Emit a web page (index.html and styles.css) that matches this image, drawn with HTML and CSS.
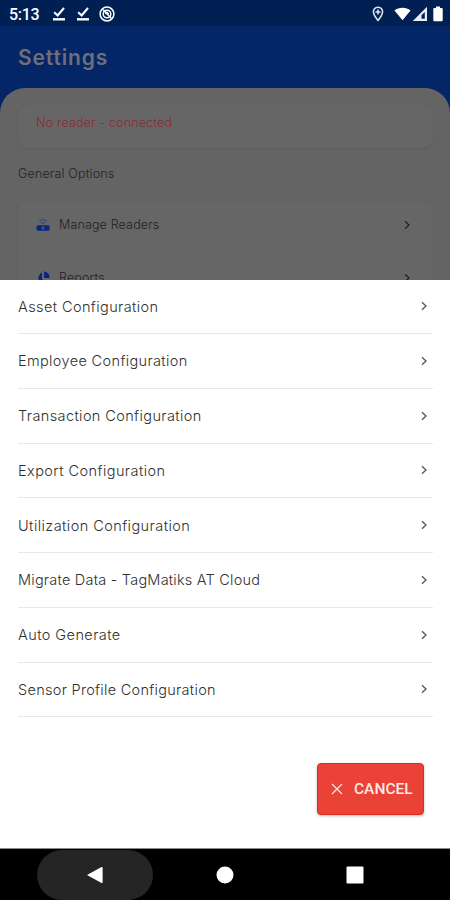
FILE: index.html
```html
<!DOCTYPE html>
<html lang="en">
<head>
<meta charset="utf-8">
<title>Settings</title>
<link rel="stylesheet" href="styles.css">
</head>
<body>
<svg class="defs" aria-hidden="true">
  <symbol id="chevron" viewBox="0 0 8 10"><path d="M2 1.2 6 5 2 8.8" fill="none" stroke="currentColor" stroke-width="1.3"/></symbol>
  <symbol id="done" viewBox="0 0 14 16"><path d="M2.2 6.2 5.6 9.4 12 2" fill="none" stroke="#fff" stroke-width="2.1"/><path d="M1 12.1h12v2.4H1z" fill="#fff"/></symbol>
</svg>
<div class="screen">
  <div class="statusbar">
    <span class="time">5:13</span>
    <svg class="done" viewBox="0 0 14 16"><use href="#done"/></svg>
    <svg class="done second" viewBox="0 0 14 16"><use href="#done"/></svg>
    <svg class="sync" viewBox="0 0 16 16" fill="none" stroke="#fff"><circle cx="8" cy="8" r="6.9" stroke-width="1.5"/><circle cx="8" cy="8" r="3.8" stroke-width="1.5"/><path d="M4 3.8 12.3 12.2M6.4 8 8 6.3 9.7 8.2" stroke-width="1.5"/></svg>
    <svg class="pin" viewBox="0 0 12 16"><path d="M6 1.2C3.2 1.2 1.4 3.2 1.4 5.8 1.4 9 6 14.4 6 14.4S10.600 9 10.600 5.800C10.600 3.200 8.800 1.200 6 1.200Z" fill="none" stroke="#e4e8f6" stroke-width="1.500"/><path d="M6 3.500v5M3.500 6h5" stroke="#e4e8f6" stroke-width="1.500"/></svg>
    <svg class="wifi" viewBox="0 0 18 16"><path d="M.5 4.200C5 .4 13 .4 17.500 4.200L9 14.700Z" fill="#fff"/></svg>
    <svg class="signal" viewBox="0 0 16 16"><path fill-rule="evenodd" d="M15 .8V15H.8ZM12.800 6V12.800H9.500V9.300Z" fill="#e9ecf7"/></svg>
    <svg class="battery" viewBox="0 0 10 16"><path d="M3 .5h4v1.500h1.700q1 0 1 1v11.200q0 1-1 1H1.300q-1 0-1-1V3q0-1 1-1H3z" fill="#fff"/></svg>
  </div>
  <div class="app">
    <h1>Settings</h1>
    <div class="page">
      <div class="reader">No reader - connected</div>
      <h2>General Options</h2>
      <div class="options">
        <div class="option">
          <svg class="glyph" viewBox="0 0 14 14"><path d="M2 7.200h10q1.500 0 1.500 1.500v2.500q0 1.500-1.500 1.500H2q-1.500 0-1.500-1.500V8.700Q.5 7.200 2 7.200z" fill="#0a2580"/><path d="M3 3.300Q7 0 11 3.300M4.500 4Q7 6.500 9.500 4" fill="none" stroke="#3b4c78" stroke-width="1.100"/><path d="M7 8.300v3.400M5.500 10h3" stroke="#667" stroke-width="1"/></svg>
          <span>Manage Readers</span><svg class="chevron"><use href="#chevron"/></svg>
        </div>
        <div class="option">
          <svg class="glyph" viewBox="0 0 14 14"><path d="M6 1.500V8l5 4.500A6 6 0 1 1 6 1.500Z" fill="#0a2580"/><path d="M8 .5A6 6 0 0 1 13.500 7H8Z" fill="#0a2580"/></svg>
          <span>Reports</span><svg class="chevron"><use href="#chevron"/></svg>
        </div>
      </div>
    </div>
  </div>
  <div class="sheet">
    <ul>
      <li><span class="w1">Asset Configuration</span><svg class="chevron"><use href="#chevron"/></svg></li>
      <li><span class="w2">Employee Configuration</span><svg class="chevron"><use href="#chevron"/></svg></li>
      <li><span class="w3">Transaction Configuration</span><svg class="chevron"><use href="#chevron"/></svg></li>
      <li><span class="w4">Export Configuration</span><svg class="chevron"><use href="#chevron"/></svg></li>
      <li><span class="w5">Utilization Configuration</span><svg class="chevron"><use href="#chevron"/></svg></li>
      <li><span class="w6">Migrate Data - TagMatiks AT Cloud</span><svg class="chevron"><use href="#chevron"/></svg></li>
      <li><span class="w7">Auto Generate</span><svg class="chevron"><use href="#chevron"/></svg></li>
      <li><span class="w8">Sensor Profile Configuration</span><svg class="chevron"><use href="#chevron"/></svg></li>
    </ul>
    <button class="cancel"><svg viewBox="0 0 12 12"><path d="M1 1 11 11M11 1 1 11" stroke="#ffe4df" stroke-width="1.300"/></svg><span>CANCEL</span></button>
  </div>
  <div class="navbar">
    <div class="key back"><svg viewBox="0 0 18 18"><path d="M1 9 15.500 1Q16.600.5 16.600 2V16q0 1.500-1.100 1Z" fill="#fff"/></svg></div>
    <div class="key"><svg viewBox="0 0 18 18"><circle cx="9" cy="9" r="8.500" fill="#fff"/></svg></div>
    <div class="key"><svg viewBox="0 0 18 18"><rect x=".5" y=".5" width="17" height="17" rx="1" fill="#fff"/></svg></div>
  </div>
</div>
</body>
</html>
```
FILE: styles.css
```css
* { box-sizing: border-box; }
body { margin: 0; font-family: Inter, Roboto, sans-serif; font-weight: 300; }
.defs { position: absolute; width: 0; height: 0; }
svg { display: block; flex: none; }
.screen { width: 450px; height: 900px; display: grid; grid-template-rows: 26px 254px 569px 51px; overflow: hidden; background: #000; }

.statusbar { background: #002053; display: flex; align-items: center; padding: 2px 7px 0 9px; color: #fff; }
.time { font: 500 16px Roboto, sans-serif; width: 43px; letter-spacing: -.3px; }
.done { width: 14px; height: 16px; margin-right: 10px; }
.sync { width: 16px; height: 16px; margin-left: -1px; }
.pin { width: 12px; height: 16px; margin-left: auto; margin-right: 10px; }
.wifi { width: 17px; height: 16px; margin-right: 1px; }
.signal { width: 16px; height: 16px; margin-right: 5px; }
.battery { width: 10px; height: 16px; }

.app { background: #042667; overflow: hidden; display: flex; flex-direction: column; }
h1 { margin: 0; height: 62px; padding: 0 18px; font-size: 21px; line-height: 64px; font-weight: 600; color: #6d7078; letter-spacing: .85px; }
.page { flex: none; height: 240px; background: #646464; border-radius: 25px 25px 0 0; padding: 17px 17px 0 18px; }
.reader { height: 43px; border-radius: 11px; background: #666; box-shadow: 0 1px 2px #5e5e5e; padding: 9px 18px; font-size: 12.5px; line-height: 18px; letter-spacing: .17px; color: #8f2933; }
h2 { margin: 17px 0 0; font-size: 12.5px; line-height: 18px; font-weight: 300; letter-spacing: .17px; color: #222; }
.options { margin-top: 18px; height: 120px; background: #666; border-radius: 8px; box-shadow: 0 1px 2px #5b5b5b; padding: 0 22px 0 18px; }
.option { display: flex; align-items: center; height: 59px; font-size: 12.5px; letter-spacing: .15px; color: #222; }
.option:first-child { height: 47px; }
.glyph { width: 14px; height: 14px; margin-right: 9px; }
.chevron { width: 8px; height: 10px; margin-left: auto; color: #555; }
.option .chevron { color: #222; }

.sheet { background: #fff; border-bottom: 1px solid #888; display: flex; flex-direction: column; align-items: flex-start; }
ul { list-style: none; margin: 0; padding: 0 17px 0 18px; width: 100%; }
li { display: flex; align-items: center; height: 54.75px; border-bottom: 1px solid #e8e8e8; padding-right: 5px; font-size: 14.5px; color: #303030; }
li:first-child { height: 54px; padding-bottom: 1px; }
.w1 { letter-spacing: .4px; }
.w2 { letter-spacing: .36px; }
.w3 { letter-spacing: .39px; }
.w4 { letter-spacing: .43px; }
.w5 { letter-spacing: .44px; }
.w6 { letter-spacing: .22px; }
.w7 { letter-spacing: .43px; }
.w8 { letter-spacing: .29px; }
.cancel { align-self: flex-end; margin: 46px 26px 0 0; width: 107px; height: 52px; border: 1px solid #df2a20; border-radius: 4px; background: #ea4236; box-shadow: 0 1px 3px #bbb; color: #ffeae6; padding: 0 0 0 13px; display: flex; align-items: center; gap: 11px; font: 500 15.5px Roboto, sans-serif; }
.cancel svg { width: 12px; height: 12px; }

.navbar { display: flex; justify-content: center; gap: 14px; background: #000; }
.key { width: 116px; height: 50px; margin-top: 1px; padding-bottom: 1px; display: flex; align-items: center; justify-content: center; border-radius: 25px; }
.back { background: #252525; }
.key svg { width: 18px; height: 18px; }
```
